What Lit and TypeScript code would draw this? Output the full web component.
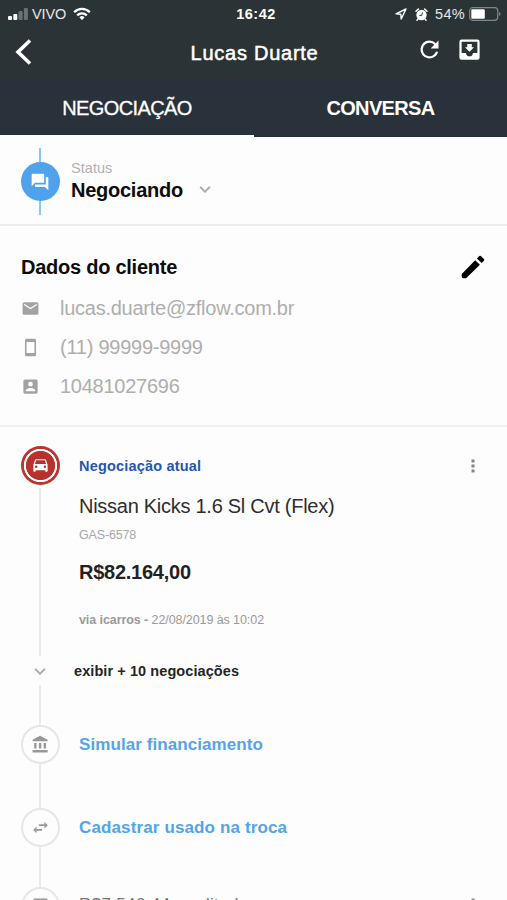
import { LitElement, html, css, svg } from "lit";
import { customElement } from "lit/decorators.js";

const I = {
  refresh: "M17.65 6.35A7.96 7.96 0 0 0 12 4a8 8 0 1 0 7.73 10h-2.08A6 6 0 1 1 12 6c1.66 0 3.14.69 4.22 1.78L13 11h7V4z",
  inbox: "M19 3H5a2 2 0 0 0-2 2v14a2 2 0 0 0 2 2h14a2 2 0 0 0 2-2V5a2 2 0 0 0-2-2zm0 12h-4a3 3 0 0 1-6 0H5V5h14zM16 10h-2V7h-4v3H8l4 4z",
  forum: "M21 6h-2v9H6v2c0 .55.45 1 1 1h11l4 4V7c0-.55-.45-1-1-1zm-4 6V3c0-.55-.45-1-1-1H3c-.55 0-1 .45-1 1v14l4-4h10c.55 0 1-.45 1-1z",
  edit: "M3 17.5v2a1.5 1.5 0 0 0 1.5 1.5h2L17.5 10.25l-3.75-3.75zM20.71 7.04a1 1 0 0 0 0-1.41l-2.34-2.34a1 1 0 0 0-1.41 0l-1.83 1.83 3.75 3.75z",
  mail: "M20 4H4a2 2 0 0 0-2 2v12a2 2 0 0 0 2 2h16a2 2 0 0 0 2-2V6a2 2 0 0 0-2-2zm0 4-8 5-8-5V6l8 5 8-5z",
  phone: "M17 1.01 7 1a2 2 0 0 0-2 2v18a2 2 0 0 0 2 2h10a2 2 0 0 0 2-2V3a2 2 0 0 0-2-1.99zM17 19H7V5h10z",
  account: "M3 5v14a2 2 0 0 0 2 2h14a2 2 0 0 0 2-2V5a2 2 0 0 0-2-2H5a2 2 0 0 0-2 2zm12 4a3 3 0 1 1-6 0 3 3 0 0 1 6 0zm-9 8c0-2 4-3.1 6-3.1s6 1.1 6 3.1v1H6z",
  car: "M18.92 5.01C18.72 4.42 18.16 4 17.5 4h-11c-.66 0-1.21.42-1.42 1.01L3 11v8c0 .55.45 1 1 1h1c.55 0 1-.45 1-1v-1h12v1c0 .55.45 1 1 1h1c.55 0 1-.45 1-1v-8zM6.5 15a1.5 1.5 0 1 1 0-3 1.5 1.5 0 0 1 0 3zm11 0a1.5 1.5 0 1 1 0-3 1.5 1.5 0 0 1 0 3zM5 10l1.5-4.5h11L19 10z",
  bank: "M4 10v7h3v-7zm6 0v7h3v-7zM2 22h19v-3H2zm14-12v7h3v-7zM11.5 1 2 6v2h19V6z",
  swap: "M6.99 10.7 2.8 15l4.19 4.3V16.2H14v-2.4H6.99zM21.2 9l-4.19-4.3v3.1H10v2.4h7.01v3.1z",
  more: "M10.2 4.2h3.6v3.6h-3.6zM10.2 10.2h3.6v3.6h-3.6zM10.2 16.2h3.6v3.6h-3.6z",
  down: "M7.41 7.84 12 12.42l4.59-4.58L18 9.25l-6 6-6-6z",
  card: "M4.5 2h15a1.5 1.5 0 0 1 1.5 1.5V19H3V3.5A1.5 1.5 0 0 1 4.500 2z",
};

const icon = (d: string, cls: string) =>
  html`<svg class="icon ${cls}" viewBox="0 0 24 24">${svg`<path fill-rule="evenodd" d=${d}></path>`}</svg>`;

@customElement("app-root")
export class AppRoot extends LitElement {
  static styles = css`
    :host { display: block; width: 507px; height: 900px; overflow: hidden; background: #fdfdfd; color: #111;
      font-family: "Liberation Sans", Arial, sans-serif; }
    * { box-sizing: border-box; }
    .icon { display: block; fill: currentColor; flex: none; }
    .t { white-space: nowrap; display: block; }
    header { background: #2a3437; color: #fff; height: 137px; display: flex; flex-direction: column; }
    .statusbar { height: 27px; display: grid; grid-template-columns: 1fr auto 1fr; align-items: center; padding: 1px 6px 0 8px; }
    .left { display: flex; align-items: center; }
    .right { display: flex; align-items: center; justify-content: flex-end; }
    .signal { width: 21px; height: 12px; margin-right: 3px; }
    .carrier { font-size: 14.5px; letter-spacing: -0.1px; color: #e4e7e8; }
    .wifi { width: 18px; height: 14px; margin-left: 7px; }
    .clock { font-size: 14.5px; font-weight: 700; letter-spacing: 0.5px; margin-left: 3px; }
    .loc { width: 12px; height: 12px; margin-right: 8px; }
    .alarm { width: 13px; height: 13px; margin-right: 7px; }
    .pct { font-size: 14.5px; letter-spacing: 0.3px; color: #e4e7e8; margin-right: 4px; }
    .battery { width: 32px; height: 14px; }
    .nav { height: 54px; display: grid; grid-template-columns: 60px 1fr 60px; align-items: center; }
    .back { width: 17px; height: 28px; margin: -4px 0 0 15px; }
    .title { text-align: center; font-size: 20px; letter-spacing: 0.75px; -webkit-text-stroke: 0.5px #fff; margin-top: -2px; padding-left: 2px; }
    .actions { display: flex; justify-content: flex-end; gap: 13px; padding-right: 24px; margin-top: -9px; }
    .act { width: 27px; height: 27px; }
    .tabs { flex: 1; display: grid; grid-template-columns: 254px 253px; background: #29323a; }
    .tab { display: flex; align-items: center; justify-content: center; font-size: 20px; border-bottom: 2px solid #29323a; padding-top: 1px; }
    .tab.on { border-color: #fff; -webkit-text-stroke: 0.3px #fff; letter-spacing: -0.6px; }
    .tab.bold { font-weight: 700; letter-spacing: -0.65px; }
    .status { height: 89px; border-bottom: 2px solid #ececec; display: flex; padding-left: 20px; }
    .node { width: 40px; display: flex; flex-direction: column; align-items: center; flex: none; }
    .status .node { padding-top: 11px; }
    .bluebar { width: 2px; height: 14px; background: #8dc6f4; }
    .blue { width: 39px; height: 39px; border-radius: 50%; background: #4fa3ec; display: grid; place-items: center; color: #fff; }
    .forum { width: 20px; height: 20px; }
    .statustext { padding: 22px 0 0 11px; }
    .label { font-size: 14.5px; line-height: 18px; letter-spacing: 0.05px; color: #b1b1b1; }
    .value { display: flex; align-items: center; height: 26px; gap: 11px; }
    .strong { font-size: 20px; font-weight: 700; letter-spacing: -0.25px; color: #0c0c0c; }
    .chev { width: 22px; height: 22px; color: #a6a6a6; }
    .client { height: 201px; border-bottom: 2px solid #f0f0f0; padding: 26px 21px 0; }
    .head { display: flex; justify-content: space-between; align-items: center; height: 30px; margin-bottom: 7px; }
    .head .icon { width: 30px; height: 30px; color: #000; margin-right: -2px; }
    .row { display: flex; align-items: center; height: 39px; color: #aeaeae; font-size: 20px; letter-spacing: -0.25px; }
    .row .icon { width: 19px; height: 19px; margin-right: 20px; color: #a2a2a2; }
    .timeline { height: 473px; display: grid; grid-template-columns: 40px 1fr; padding-left: 20px; overflow: hidden; }
    .rail { display: flex; flex-direction: column; align-items: center; padding-top: 19px; }
    .rail > * { flex: none; }
    .line { width: 2px; background: #ebebeb; }
    .to-chev { height: 168px; } .to-bank { height: 40px; } .to-swap { height: 44px; } .to-card { height: 40px; }
    .red { width: 39px; height: 39px; border-radius: 50%; margin-bottom: 3px; display: grid; place-items: center; color: #fff;
      background: radial-gradient(circle, #b8322d 14.2px, #fff 15px, #fff 16.3px, #bd3430 17px); }
    .car { width: 19px; height: 19px; }
    .rail .chev { margin: 5px 0 2px; }
    .ring { width: 39px; height: 39px; border-radius: 50%; border: 2px solid #e6e6e6; display: grid; place-items: center; color: #989898; }
    .s19 { width: 19px; height: 19px; }
    .body { padding: 19px 23px 0 19px; }
    .top { height: 40px; display: flex; align-items: center; justify-content: space-between; color: #2458b0; font-size: 14.5px; letter-spacing: 0.18px; font-weight: 700; }
    .more { width: 20px; height: 20px; margin-right: 1px; color: #858585; }
    .car-name { font-size: 20px; line-height: 24px; letter-spacing: -0.27px; margin-top: 8px; color: #2d2d2d; }
    .plate { font-size: 12.5px; line-height: 16px; letter-spacing: -0.15px; margin-top: 9px; color: #a8a8a8; }
    .price { font-size: 20px; line-height: 24px; letter-spacing: -0.25px; margin-top: 17px; font-weight: 700; color: #222; }
    .via { font-size: 12.5px; line-height: 16px; letter-spacing: -0.08px; margin-top: 28px; color: #999; }
    .show { font-size: 14.5px; line-height: 20px; letter-spacing: 0.08px; margin: 33px 0 0 -5px; font-weight: 700; color: #252525; }
    .link { font-size: 17px; line-height: 24px; letter-spacing: 0.08px; font-weight: 700; color: #53a4ea; }
    .l1 { margin-top: 52px; } .l2 { margin-top: 59px; letter-spacing: 0.13px; }
    .last { display: flex; justify-content: space-between; align-items: center; margin-top: 53px; color: #777; font-size: 17px; line-height: 24px; letter-spacing: 0.35px; }
  `;

  render() {
    return html`
      <header>
        <div class="statusbar">
          <div class="left">
            <svg class="signal" viewBox="0 0 21 12" fill="#fff">
              <rect x="0" y="8" width="4" height="4" rx="1"></rect><rect x="5.3" y="6" width="4" height="6" rx="1"></rect>
              <rect x="10.6" y="3" width="4" height="9" rx="1" opacity=".3"></rect><rect x="15.9" y="0" width="4" height="12" rx="1" opacity=".3"></rect>
            </svg>
            <span class="t carrier">VIVO</span>
            <svg class="wifi" viewBox="0 0 18 14" fill="none" stroke="#fff" stroke-width="2.3">
              <path d="M1.2 5.2a11 11 0 0 1 15.6 0M4.2 8.4a6.8 6.8 0 0 1 9.6 0"></path><path d="M9 13 6.4 10.4a3.7 3.7 0 0 1 5.2 0z" fill="#fff" stroke="none"></path>
            </svg>
          </div>
          <span class="t clock">16:42</span>
          <div class="right">
            <svg class="loc" viewBox="0 0 12 12" fill="none" stroke="#fff" stroke-width="1.4" stroke-linejoin="round"><path d="M11 1 1 5.8l4.8.4.4 4.8z"></path></svg>
            <svg class="alarm" viewBox="0 0 13 13"><circle cx="6.5" cy="7" r="5.2" fill="#fff"></circle><path d="M1 3.2 3.4 1M12 3.2 9.6 1M3 11l-1 1.2M10 11l1 1.2" stroke="#fff" stroke-width="1.5" stroke-linecap="round"></path><path d="M7.5 4.500 6.700 7.4H4.4" fill="none" stroke="#2a3437"></path></svg>
            <span class="t pct">54%</span>
            <svg class="battery" viewBox="0 0 32 14"><rect x=".7" y=".7" width="28" height="12.6" rx="3" fill="none" stroke="#7f8688" stroke-width="1.2"></rect><rect x="2.3" y="2.3" width="13.5" height="9.4" rx="1.3" fill="#fff"></rect><path d="M30 5v4q1.5-.5 1.5-2T30 5" fill="#7f8688"></path></svg>
          </div>
        </div>
        <div class="nav">
          <svg class="back" viewBox="0 0 17 28" fill="none" stroke="#fff" stroke-width="3.6"><path d="M15 2.5 3 14l12 11.5"></path></svg>
          <span class="t title">Lucas Duarte</span>
          <div class="actions">${icon(I.refresh, "act")}${icon(I.inbox, "act")}</div>
        </div>
        <div class="tabs"><div class="tab on">NEGOCIAÇÃO</div><div class="tab bold">CONVERSA</div></div>
      </header>
      <section class="status">
        <div class="node"><div class="bluebar"></div><div class="blue">${icon(I.forum, "forum")}</div><div class="bluebar"></div></div>
        <div class="statustext">
          <span class="t label">Status</span>
          <div class="value"><span class="t strong">Negociando</span>${icon(I.down, "chev")}</div>
        </div>
      </section>
      <section class="client">
        <div class="head"><span class="t strong">Dados do cliente</span>${icon(I.edit, "")}</div>
        <div class="row">${icon(I.mail, "")}<span class="t">lucas.duarte@zflow.com.br</span></div>
        <div class="row">${icon(I.phone, "")}<span class="t">(11) 99999-9999</span></div>
        <div class="row">${icon(I.account, "")}<span class="t">10481027696</span></div>
      </section>
      <section class="timeline">
        <div class="rail">
          <div class="red">${icon(I.car, "car")}</div>
          <div class="line to-chev"></div>
          ${icon(I.down, "chev")}
          <div class="line to-bank"></div>
          <div class="ring">${icon(I.bank, "s19")}</div>
          <div class="line to-swap"></div>
          <div class="ring">${icon(I.swap, "s19")}</div>
          <div class="line to-card"></div>
          <div class="ring">${icon(I.card, "s19")}</div>
        </div>
        <div class="body">
          <div class="top"><span class="t">Negociação atual</span>${icon(I.more, "more")}</div>
          <span class="t car-name">Nissan Kicks 1.6 Sl Cvt (Flex)</span>
          <span class="t plate">GAS-6578</span>
          <span class="t price">R$82.164,00</span>
          <span class="t via"><b>via icarros -</b> 22/08/2019 às 10:02</span>
          <span class="t show">exibir + 10 negociações</span>
          <span class="t link l1">Simular financiamento</span>
          <span class="t link l2">Cadastrar usado na troca</span>
          <div class="last"><span class="t">R$7.540,44 creditado</span>${icon(I.more, "more")}</div>
        </div>
      </section>
    `;
  }
}
